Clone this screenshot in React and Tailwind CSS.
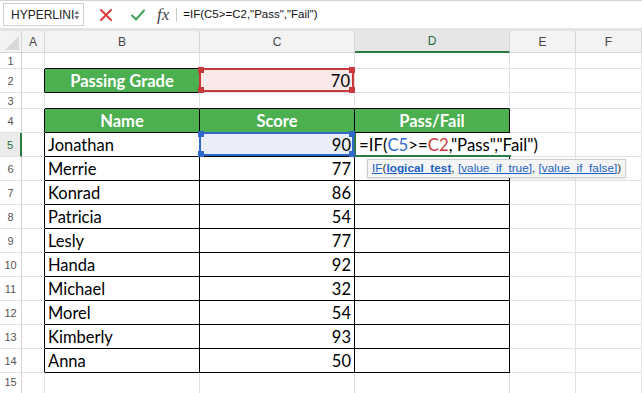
import React from "react";

const cols = ["A", "B", "C", "D", "E", "F"];

const people = [
  ["Jonathan", 90],
  ["Merrie", 77],
  ["Konrad", 86],
  ["Patricia", 54],
  ["Lesly", 77],
  ["Handa", 92],
  ["Michael", 32],
  ["Morel", 54],
  ["Kimberly", 93],
  ["Anna", 50],
];

const Handle = ({ pos, color }) => (
  <div className={`absolute w-[6px] h-[6px] ${color} ${pos} z-20`} />
);

const Highlight = ({ border, bg, handle }) => (
  <div className={`absolute -left-[1px] -top-[1px] right-0 bottom-0 border-2 ${border} ${bg}`}>
    <Handle color={handle} pos="-left-[3px] -top-[3px]" />
    <Handle color={handle} pos="-right-[3px] -top-[3px]" />
    <Handle color={handle} pos="-left-[3px] -bottom-[3px]" />
    <Handle color={handle} pos="-right-[3px] -bottom-[3px]" />
  </div>
);

const FormulaBar = () => (
  <div className="h-[31px] flex items-center border-t border-[#d4d4d4] border-b-[3px] border-b-[#e4e4e4] bg-white font-['Liberation_Sans',sans-serif]">
    <div className="ml-[3px] w-[81px] h-[23px] border border-[#cfcfcf] flex items-center pl-[7px] text-[12px] text-[#222]">
      <span className="flex-1">HYPERLINI</span>
      <svg width="8" height="16" viewBox="0 0 8 16" className="mr-[3px]">
        <path d="M4 1.5 L7.5 6.5 L0.5 6.5 Z" fill="#7a7a7a" />
        <path d="M4 14.5 L7.5 9.5 L0.5 9.5 Z" fill="#7a7a7a" />
      </svg>
    </div>
    <svg width="14" height="14" viewBox="0 0 14 14" className="ml-[15px]">
      <path d="M2 2 L12 12 M12 2 L2 12" stroke="#e03a3e" strokeWidth="2" strokeLinecap="round" />
    </svg>
    <svg width="16" height="14" viewBox="0 0 16 14" className="ml-[17px]">
      <path d="M2 7.5 L6 11.5 L14 2.5" stroke="#3aa757" strokeWidth="2" fill="none" strokeLinecap="round" strokeLinejoin="round" />
    </svg>
    <span className="ml-[11px] font-['Liberation_Serif',serif] italic text-[17px] text-[#444]">fx</span>
    <div className="ml-[7px] w-px h-[14px] bg-[#ccc]" />
    <span className="ml-[6px] text-[11.5px] text-[#111]">=IF(C5&gt;=C2,"Pass","Fail")</span>
  </div>
);

const App = () => {
  const rowHeights = [16, 24, 16, 24, 24, 24, 24, 24, 24, 24, 24, 24, 24, 24];

  const renderCell = (r, c) => {
    // r: 1-based row, c: 0-based col index (A=0)
    const inTable = r >= 4 && r <= 14 && c >= 1 && c <= 3;
    const isGrade = r === 2 && c === 1;
    let cls = "relative border-r border-b border-[#e2e2e2]";
    let content = null;

    if (inTable || isGrade) cls = "relative border-r border-b border-black";
    if ((r === 3 && c >= 1 && c <= 3) || (r === 1 && c === 1)) cls = "relative border-r border-b border-[#e2e2e2] border-b-black";
    if (c === 0 && (r === 2 || (r >= 4 && r <= 14))) cls = "relative border-b border-[#e2e2e2] border-r border-r-black";
    if (r === 2 && c === 2) cls = "relative border-r border-b border-[#e2e2e2]";

    if (isGrade) {
      cls += " bg-[#4caf50]";
      content = (
        <div className="h-full flex items-center justify-center pt-[2px] text-white font-bold text-[16.5px]">Passing Grade</div>
      );
    }
    if (r === 2 && c === 2) {
      content = (
        <>
          <Highlight border="border-[#c8383d]" bg="bg-[#f9e8e8]" handle="bg-[#c8383d]" />
          <div className="relative h-full flex items-center justify-end pt-[2px] pr-[4px] text-[16.5px] text-black">70</div>
        </>
      );
    }
    if (r === 4 && inTable) {
      cls += " bg-[#4caf50]";
      content = (
        <div className="h-full flex items-center justify-center pt-[2px] text-white font-bold text-[16.5px]">
          {["Name", "Score", "Pass/Fail"][c - 1]}
        </div>
      );
    }
    if (r >= 5 && r <= 14 && inTable) {
      const [name, score] = people[r - 5];
      if (c === 1) content = <div className="h-full flex items-center pt-[2px] pl-[3px] text-[16.5px] text-black">{name}</div>;
      if (c === 2) {
        content = (
          <>
            {r === 5 && <Highlight border="border-[#3069c9]" bg="bg-[#e9eef9]" handle="bg-[#3069c9]" />}
            <div className="relative h-full flex items-center justify-end pt-[2px] pr-[3px] text-[16.5px] text-black">{score}</div>
          </>
        );
      }
      if (c === 3 && r === 5) {
        content = (
          <>
            <div className="absolute -left-[1px] top-0 h-[23px] w-[192px] bg-white z-10 flex items-center pt-[2px] pl-[3px] text-[16.8px] text-black border-l-2 border-[#2a7a44] whitespace-nowrap">
              <span>=IF(</span>
              <span className="text-[#3069c9]">C5</span>
              <span>&gt;=</span>
              <span className="text-[#c8383d]">C2</span>
              <span>,"Pass","Fail")</span>
            </div>
            <div className="absolute -left-[1px] -bottom-[1px] h-[2px] w-[157px] bg-[#2a7a44] z-10" />
            <div className="absolute left-[12px] top-[26px] z-30 h-[19px] flex items-center px-[4px] bg-[#f5f5f5] border border-[#cdcdcd] shadow-sm whitespace-nowrap text-[11.8px] font-['Liberation_Sans',sans-serif] text-[#333]">
              <span className="text-[#1a5fc4] underline">IF</span>
              <span>(</span>
              <span className="text-[#1a5fc4] underline font-bold">logical_test</span>
              <span>,&nbsp;</span>
              <span className="text-[#1a5fc4] underline">[value_if_true]</span>
              <span>,&nbsp;</span>
              <span className="text-[#1a5fc4] underline">[value_if_false]</span>
              <span>)</span>
            </div>
          </>
        );
      }
    }
    return (
      <div key={`${r}-${c}`} className={cls}>
        {content}
      </div>
    );
  };

  return (
    <div className="w-[642px] h-[393px] overflow-hidden bg-white font-['Lato',sans-serif]">
      <FormulaBar />
      <div className="grid grid-cols-[22px_23px_155px_155px_155px_66px_1fr] grid-rows-[22px_16px_24px_16px_repeat(11,24px)_20px] leading-none">
        {/* header row */}
        <div className="relative bg-[#f3f3f3] border-r border-b border-[#d6d6d6] overflow-hidden">
          <div className="absolute right-[2px] bottom-[2px] w-0 h-0 border-l-[14px] border-l-transparent border-b-[14px] border-b-[#d9d9d9]" />
        </div>
        {cols.map((h) => (
          <div
            key={h}
            className={`flex items-center justify-center text-[12px] font-['Liberation_Sans',sans-serif] border-r border-[#d6d6d6] ${
              h === "D"
                ? "bg-[#e6e6e6] text-[#1f6b3a] border-b-2 border-b-[#2a7a44]"
                : "bg-[#f3f3f3] text-[#444] border-b border-b-[#d6d6d6]"
            }`}
          >
            {h}
          </div>
        ))}
        {rowHeights.map((h, i) => {
          const r = i + 1;
          return (
            <React.Fragment key={r}>
              <div
                className={`flex items-center justify-center pt-[2px] text-[11px] font-['Liberation_Sans',sans-serif] border-b border-[#e2e2e2] ${
                  r === 5
                    ? "bg-[#ececec] text-[#1f6b3a] border-r-2 border-r-[#2a7a44]"
                    : "bg-white text-[#555] border-r border-r-[#d6d6d6]"
                }`}
              >
                {r}
              </div>
              {cols.map((_, c) => renderCell(r, c))}
            </React.Fragment>
          );
        })}
        <div className="flex items-start pt-[4px] justify-center text-[11px] font-['Liberation_Sans',sans-serif] text-[#555] border-r border-[#d6d6d6]">
          15
        </div>
        {cols.map((c) => (
          <div key={c} className="border-r border-[#e2e2e2]" />
        ))}
      </div>
    </div>
  );
};

export default App;
